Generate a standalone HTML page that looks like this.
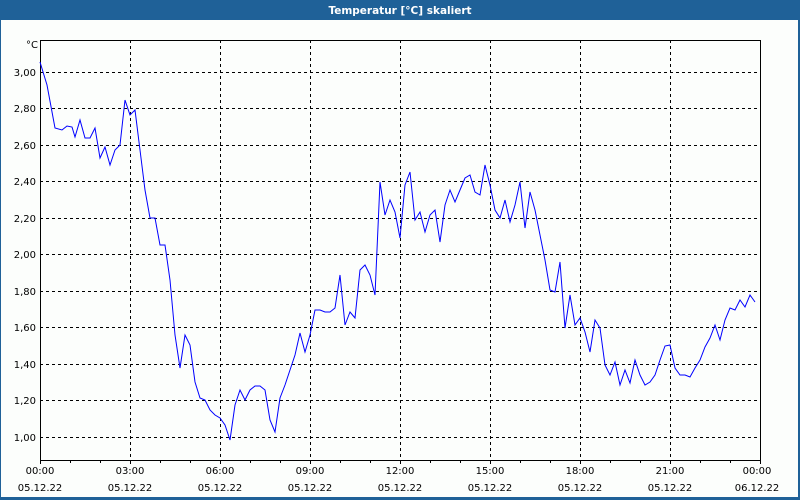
<!DOCTYPE html>
<html><head><meta charset="utf-8"><style>
html,body{margin:0;padding:0;background:#fff}
svg{display:block}
text{font-family:"DejaVu Sans","Liberation Sans",sans-serif;font-size:10px;fill:#000}
</style></head><body>
<svg width="800" height="500" xmlns="http://www.w3.org/2000/svg">
<rect x="0" y="0" width="800" height="500" fill="#1f6198"/>
<rect x="1" y="20" width="797" height="477" fill="#fcfefc"/>
<text x="400" y="14" text-anchor="middle" style="fill:#fff;font-weight:bold;font-size:10.5px">Temperatur [°C] skaliert</text>
<g stroke="#000" stroke-width="1" stroke-dasharray="3,3" fill="none" shape-rendering="crispEdges">
<path d="M130.5 40V460M220.5 40V460M310.5 40V460M400.5 40V460M490.5 40V460M580.5 40V460M670.5 40V460"/>
<path d="M40 72.5H760M40 108.5H760M40 145.5H760M40 181.5H760M40 218.5H760M40 254.5H760M40 291.5H760M40 327.5H760M40 364.5H760M40 400.5H760M40 437.5H760"/>
</g>
<g stroke="#000" fill="none" shape-rendering="crispEdges">
<rect x="40.5" y="40.5" width="720" height="420"/>
<path d="M40.5 460V464M70.5 460V463M100.5 460V463M130.5 460V464M160.5 460V463M190.5 460V463M220.5 460V464M250.5 460V463M280.5 460V463M310.5 460V464M340.5 460V463M370.5 460V463M400.5 460V464M430.5 460V463M460.5 460V463M490.5 460V464M520.5 460V463M550.5 460V463M580.5 460V464M610.5 460V463M640.5 460V463M670.5 460V464M700.5 460V463M730.5 460V463M760.5 460V464"/>
</g>
<polyline fill="none" stroke="#0000ff" stroke-width="1" points="40,62 47,85 55,128 62,130 67,126 72,127 75,137 80,120 85,138 90,138 95,128 100,158 105,147 110,165 115,150 120,145 125,100 130,115 135,110 140,150 145,190 150,218 155,218 160,245 165,245 170,280 175,335 180,368 185,335 190,345 195,382 200,398 205,400 210,410 215,415 220,418 225,425 230,440 235,405 240,390 245,400 250,390 255,386 260,386 265,390 270,420 275,432 280,398 285,385 290,370 295,355 300,333 305,352 310,335 315,310 320,310 325,312 330,312 335,308 340,275 345,325 350,312 355,318 360,270 365,265 370,275 375,295 380,182 385,215 390,200 395,212 400,238 405,185 410,172 415,220 420,212 425,232 430,215 435,210 440,242 445,205 450,190 455,202 460,190 465,178 470,175 475,192 480,195 485,165 490,185 495,210 500,218 505,200 510,222 515,205 520,182 525,228 530,192 535,210 540,235 545,260 550,290 555,292 560,262 565,328 570,295 575,325 580,318 585,332 590,352 595,320 600,328 605,365 610,375 615,362 620,385 625,370 630,383 635,360 640,375 645,385 650,382 655,375 660,360 665,346 670,345 675,368 680,375 685,375 690,377 695,368 700,360 705,347 710,338 715,325 720,340 725,320 730,308 735,310 740,300 745,307 750,295 755,302"/>
<g text-anchor="end">
<text x="38" y="48">°C</text>
<text x="36" y="76">3,00</text>
<text x="36" y="112">2,80</text>
<text x="36" y="149">2,60</text>
<text x="36" y="185">2,40</text>
<text x="36" y="222">2,20</text>
<text x="36" y="258">2,00</text>
<text x="36" y="295">1,80</text>
<text x="36" y="331">1,60</text>
<text x="36" y="368">1,40</text>
<text x="36" y="404">1,20</text>
<text x="36" y="441">1,00</text>
</g>
<g text-anchor="middle">
<text x="40" y="474">00:00</text><text x="40" y="491">05.12.22</text>
<text x="130" y="474">03:00</text><text x="130" y="491">05.12.22</text>
<text x="220" y="474">06:00</text><text x="220" y="491">05.12.22</text>
<text x="310" y="474">09:00</text><text x="310" y="491">05.12.22</text>
<text x="400" y="474">12:00</text><text x="400" y="491">05.12.22</text>
<text x="490" y="474">15:00</text><text x="490" y="491">05.12.22</text>
<text x="580" y="474">18:00</text><text x="580" y="491">05.12.22</text>
<text x="670" y="474">21:00</text><text x="670" y="491">05.12.22</text>
<text x="757" y="474">00:00</text><text x="757" y="491">06.12.22</text>
</g>
</svg>
</body></html>
